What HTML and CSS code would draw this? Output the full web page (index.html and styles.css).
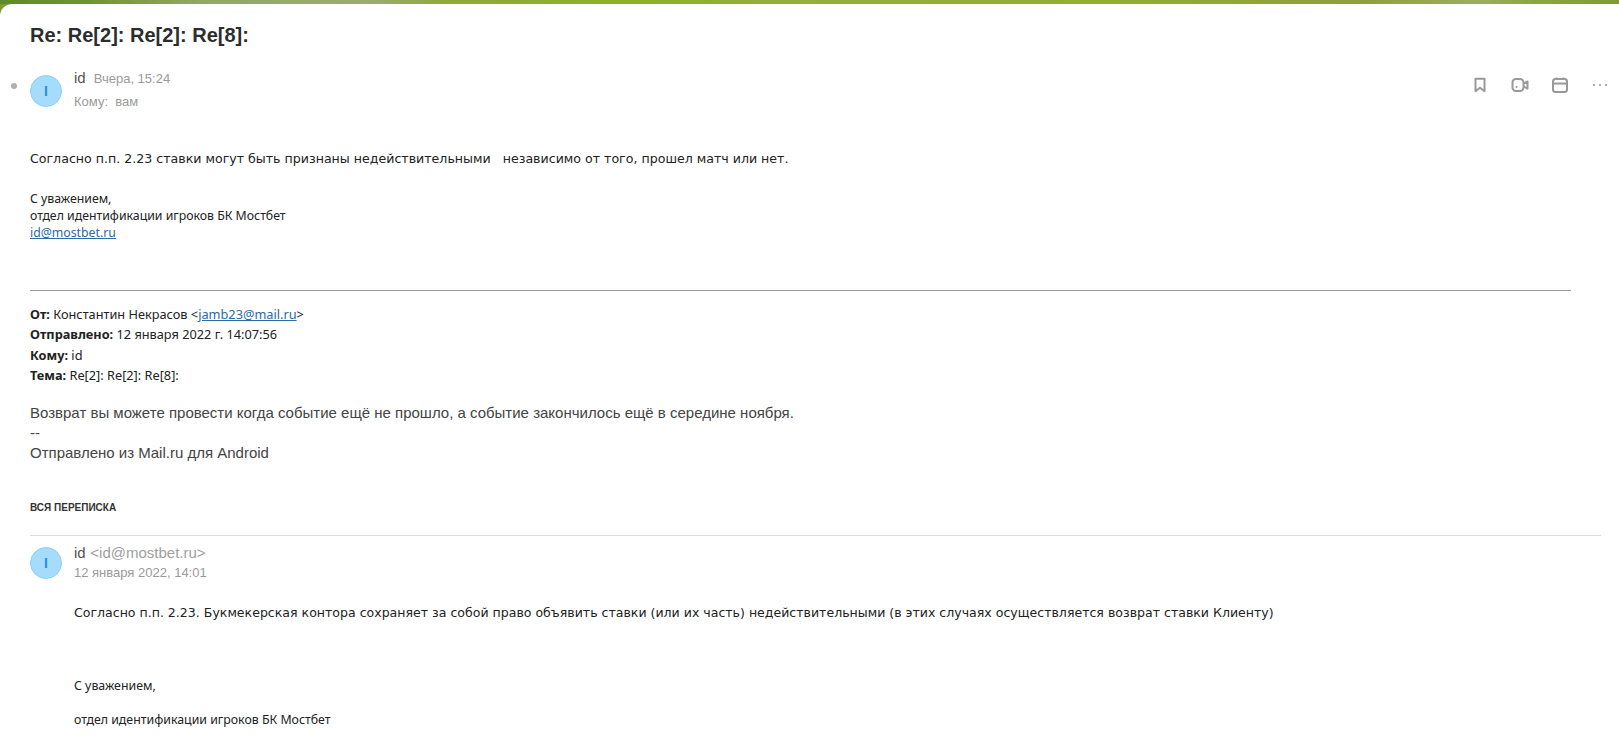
FILE: index.html
```html
<!DOCTYPE html>
<html lang="ru">
<head>
<meta charset="utf-8">
<title>Re: Re[2]: Re[2]: Re[8]:</title>
<link rel="stylesheet" href="styles.css">
</head>
<body>
<div class="topbar"></div>
<main class="letter">
  <h1 class="subject">Re: Re[2]: Re[2]: Re[8]:</h1>
  <header class="msg-head">
    <span class="dot"></span>
    <span class="avatar">I</span>
    <div class="meta">
      <div class="meta-line"><span class="sender">id</span><span class="date">Вчера, 15:24</span></div>
      <div class="meta-line to">Кому:&nbsp; вам</div>
    </div>
    <div class="actions">
      <svg class="icon" viewBox="0 0 18 18"><path d="M4.500 2.800h9v12.400L9 11.800l-4.500 3.400z"/></svg>
      <svg class="icon" viewBox="0 0 18 18"><rect x="1.500" y="3" width="11" height="12" rx="3.500"/><path d="M12.500 7.500l4-2v7l-4-2"/><circle class="fill" cx="5.500" cy="11" r="1"/></svg>
      <svg class="icon" viewBox="0 0 18 18"><rect x="2" y="3" width="14" height="13" rx="2.500"/><path d="M2 7.500h14M5.500 1.500v2M12.500 1.500v2"/></svg>
      <svg class="icon" viewBox="0 0 18 18"><circle class="fill" cx="3" cy="9" r="1.100"/><circle class="fill" cx="9" cy="9" r="1.100"/><circle class="fill" cx="15" cy="9" r="1.100"/></svg>
    </div>
  </header>

  <p class="body-line first">Согласно п.п. 2.23 ставки могут быть признаны недействительными &nbsp; независимо от того, прошел матч или нет.</p>
  <div class="sign">
    <div>С уважением,</div>
    <div>отдел идентификации игроков БК Мостбет</div>
    <div><a href="#">id@mostbet.ru</a></div>
  </div>
  <hr class="rule">
  <div class="quote-head">
    <div><b>От:</b> Константин Некрасов &lt;<a href="#">jamb23@mail.ru</a>&gt;</div>
    <div><b>Отправлено:</b> 12 января 2022 г. 14:07:56</div>
    <div><b>Кому:</b> id</div>
    <div><b>Тема:</b> Re[2]: Re[2]: Re[8]:</div>
  </div>
  <div class="reply">
    <div>Возврат вы можете провести когда событие ещё не прошло, а событие закончилось ещё в середине ноября.</div>
    <div>--</div>
    <div>Отправлено из Mail.ru для Android</div>
  </div>
  <div class="thread-label">ВСЯ ПЕРЕПИСКА</div>
  <section class="thread-item">
    <header class="thread-head">
      <span class="avatar">I</span>
      <div class="meta">
        <div class="meta-line thread-line"><span class="sender">id</span> <span class="addr">&lt;id@mostbet.ru&gt;</span></div>
        <div class="meta-line thread-line to">12 января 2022, 14:01</div>
      </div>
    </header>
    <div class="thread-body">
      <p class="t1">Согласно п.п. 2.23. Букмекерская контора сохраняет за собой право объявить ставки (или их часть) недействительными (в этих случаях осуществляется возврат ставки Клиенту)</p>
      <p class="t2">С уважением,</p>
      <p class="t3">отдел идентификации игроков БК Мостбет</p>
    </div>
  </section>
</main>
</body>
</html>
```
FILE: styles.css
```css
* { box-sizing: border-box; }
html, body { margin: 0; height: 740px; overflow: hidden; background: #7f9c32; }
body { font-family: "DejaVu Sans", sans-serif; color: #1f1f1f; display: flex; flex-direction: column; }
.topbar { height: 4px; flex: none; background: linear-gradient(90deg, #5f8a2a 0, #6f9530 90px, #93a862 200px, #9aac70 370px, #8fa838 450px, #8fb02c 620px, #94ad3c 800px, #92ae32 1100px, #8f9f3c 1360px, #9cae5e 1480px, #8aa53c 1540px, #7f9c32 1619px); }
.letter { flex: 1; background: #fff; border-radius: 12px 0 0 0; padding: 0 0 0 30px; overflow: hidden; }
.subject { margin: 19px 0 0; font: bold 20px/24px "Liberation Sans", sans-serif; color: #2c2d2e; }
.msg-head { display: flex; align-items: flex-start; position: relative; margin-top: 20px; height: 48px; }
.dot { position: absolute; left: -19px; top: 16px; width: 6px; height: 6px; border-radius: 50%; background: #b0b0b0; }
.avatar { flex: none; width: 32px; height: 32px; margin-top: 8px; border-radius: 50%; background: #a5dcfb; border: 1px solid #8fd0f5; color: #2a8fd0; font: bold 14px/30px "Liberation Sans", sans-serif; text-align: center; }
.meta { margin-left: 12px; font-family: "Liberation Sans", sans-serif; }
.meta-line { font-size: 13px; line-height: 22px; color: #9a9a9a; height: 24px; }
.thread-line { height: 21px; }
.sender { font-size: 15px; color: #555; margin-right: 8px; }
.date { font-size: 13px; }
.actions { display: flex; gap: 22px; margin-left: auto; padding: 9px 10px 0 0; }
.icon { width: 18px; height: 18px; fill: none; stroke: #999; stroke-width: 2; stroke-linejoin: round; }
.icon .fill { fill: #999; stroke: none; }
.body-line { margin: 0; font-size: 12.6px; line-height: 18px; color: #222; }
.first { margin-top: 35px; }
.sign { margin-top: 22px; font-family: "Noto Sans", sans-serif; font-size: 12.3px; line-height: 17px; color: #222; }
a { color: #2b6aa5; text-decoration: underline; }
.rule { margin: 49px 0 0; width: 1541px; border: 0; border-top: 1px solid #999; }
.quote-head { margin-top: 13px; font-family: "Noto Sans", sans-serif; font-size: 12.75px; line-height: 20.25px; color: #222; }
.reply { margin-top: 18px; font: 15px/20px "Liberation Sans", sans-serif; color: #444; }
.thread-label { margin-top: 39px; font: bold 10px/12px "Liberation Sans", sans-serif; color: #333; }
.thread-item { margin-top: 21px; border-top: 1px solid #dcdcdc; width: 1571px; }
.thread-head { display: flex; height: 50px; padding-top: 6px; }
.thread-head .avatar { margin-top: 5px; }
.thread-line:first-child { height: 20px; }
.addr { font-size: 15px; color: #a0a0a0; margin-left: -7px; }
.thread-body { padding-left: 44px; font-size: 12.55px; color: #222; }
.thread-body p { margin: 0; line-height: 18px; }
.t1 { padding-top: 18px; }
.t2 { padding-top: 55px; font-family: "Noto Sans", sans-serif; font-size: 12.35px; }
.t3 { padding-top: 16px; font-family: "Noto Sans", sans-serif; font-size: 12.35px; }
```
